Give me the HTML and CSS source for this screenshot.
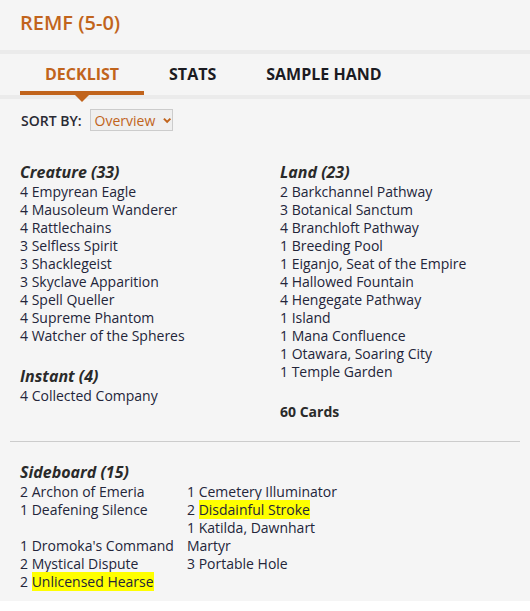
FILE: index.html
```html
<!DOCTYPE html>
<html>
<head>
<meta charset="utf-8">
<link rel="stylesheet" href="styles.css">
</head>
<body>
<div class="page">
  <h1 class="title">REMF (5-0)</h1>
  <div class="band"></div>
  <nav class="tabs">
    <div class="tab active">DECKLIST</div>
    <div class="tab">STATS</div>
    <div class="tab">SAMPLE HAND</div>
  </nav>
  <div class="band"></div>
  <div class="sort">
    <span class="sort-label">SORT BY:</span>
    <div class="select">
      <span>Overview</span>
      <svg width="9" height="7" viewBox="0 0 9 7"><path d="M1 1.5 L4.5 5 L8 1.5" fill="none" stroke="#c1641c" stroke-width="2.2"/></svg>
    </div>
  </div>
  <div class="main">
    <div class="col">
      <div class="group">
        <div class="head">Creature (33)</div>
        <div>4 Empyrean Eagle</div>
        <div>4 Mausoleum Wanderer</div>
        <div>4 Rattlechains</div>
        <div>3 Selfless Spirit</div>
        <div>3 Shacklegeist</div>
        <div>3 Skyclave Apparition</div>
        <div>4 Spell Queller</div>
        <div>4 Supreme Phantom</div>
        <div>4 Watcher of the Spheres</div>
      </div>
      <div class="group">
        <div class="head">Instant (4)</div>
        <div>4 Collected Company</div>
      </div>
    </div>
    <div class="col">
      <div class="group">
        <div class="head">Land (23)</div>
        <div>2 Barkchannel Pathway</div>
        <div>3 Botanical Sanctum</div>
        <div>4 Branchloft Pathway</div>
        <div>1 Breeding Pool</div>
        <div>1 Eiganjo, Seat of the Empire</div>
        <div>4 Hallowed Fountain</div>
        <div>4 Hengegate Pathway</div>
        <div>1 Island</div>
        <div>1 Mana Confluence</div>
        <div>1 Otawara, Soaring City</div>
        <div>1 Temple Garden</div>
      </div>
      <div class="total">60 Cards</div>
    </div>
  </div>
  <hr class="rule">
  <div class="side">
    <div class="head">Sideboard (15)</div>
    <div class="side-cols">
      <div class="side-col">
        <div>2 Archon of Emeria</div>
        <div>1 Deafening Silence</div>
        <div class="blank">&nbsp;</div>
        <div>1 Dromoka's Command</div>
        <div>2 Mystical Dispute</div>
        <div>2 <mark>Unlicensed Hearse</mark></div>
      </div>
      <div class="side-col right">
        <div>1 Cemetery Illuminator</div>
        <div>2 <mark>Disdainful Stroke</mark></div>
        <div>1 Katilda, Dawnhart Martyr</div>
        <div>3 Portable Hole</div>
      </div>
    </div>
  </div>
</div>
</body>
</html>
```
FILE: styles.css
```css
html, body {
  margin: 0;
  padding: 0;
  background: #ffffff;
}
body {
  font-family: "Open Sans", "Noto Sans", sans-serif;
  color: #23253a;
}
.page {
  background: #f5f5f5;
  height: 601px;
  overflow: hidden;
}
.title {
  margin: 0;
  padding: 10px 20px 0;
  height: 50px;
  box-sizing: border-box;
  font-size: 20px;
  font-weight: 600;
  color: #c1641c;
  line-height: 26px;
}
.band {
  height: 4px;
  background: #ebebeb;
}
.tabs {
  display: flex;
  padding: 0 20px;
  height: 41px;
}
.tab {
  padding: 3px 25px 0;
  font-size: 16px;
  font-weight: 700;
  color: #1b1b22;
  line-height: 34px;
  position: relative;
  border-bottom: 4px solid transparent;
  box-sizing: border-box;
  height: 41px;
}
.tab.active {
  color: #c1641c;
  border-bottom-color: #c1641c;
}
.tab.active::after {
  content: "";
  position: absolute;
  left: 50%;
  bottom: -11px;
  margin-left: -7px;
  border-left: 7px solid transparent;
  border-right: 7px solid transparent;
  border-top: 7px solid #c1641c;
}
.sort {
  display: flex;
  align-items: center;
  gap: 8px;
  padding: 10px 0 0 21px;
}
.sort-label {
  font-size: 14px;
  font-weight: 600;
  color: #2a2a33;
}
.select {
  display: flex;
  align-items: center;
  gap: 8px;
  width: 83px;
  height: 22px;
  box-sizing: border-box;
  border: 1px solid #cccccc;
  background: #efefef;
  padding: 0 0 0 4px;
  font-size: 14px;
  color: #c1641c;
}
.main {
  display: grid;
  grid-template-columns: 260px 250px;
  padding: 31px 20px 0;
}
.group {
  font-size: 14px;
  line-height: 18px;
  margin-bottom: 21px;
}
.col > .group:last-child {
  margin-bottom: 0;
}
.head {
  font-size: 16px;
  font-weight: 700;
  font-style: italic;
  line-height: 21px;
  color: #2a2a2a;
}
.total {
  font-size: 14px;
  font-weight: 700;
  line-height: 20px;
  color: #2a2a2a;
}
.rule {
  margin: 19px 10px 0;
  border: 0;
  border-top: 1px solid #cccccc;
  height: 0;
}
.side {
  padding: 20px 20px 0;
  font-size: 14px;
  line-height: 18px;
}
.side-cols {
  display: grid;
  grid-template-columns: 167px 160px;
}
mark {
  background: #ffff00;
  color: inherit;
}
```
